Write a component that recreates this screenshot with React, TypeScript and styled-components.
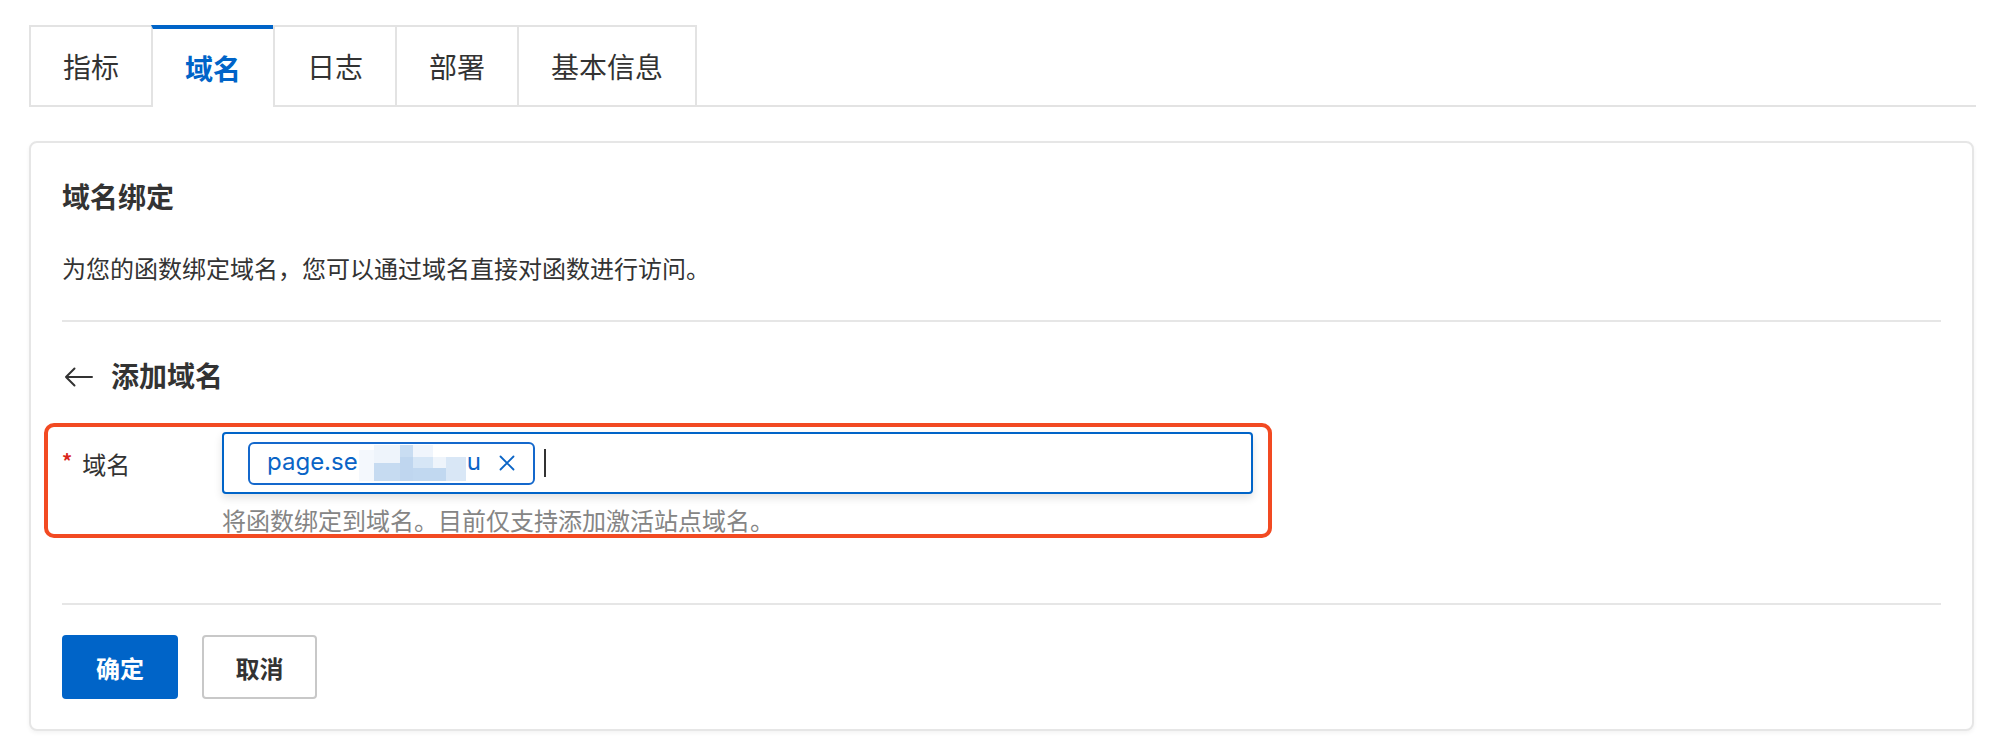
import React from "react";
import styled, { createGlobalStyle } from "styled-components";

const GlobalStyle = createGlobalStyle`
  html, body {
    margin: 0;
    padding: 0;
    background: #ffffff;
  }
  body {
    font-family: "Inter", "Noto Sans CJK SC", sans-serif;
    color: #333333;
  }
`;

const Page = styled.div`
  padding: 25px 18px 20px 29px;
`;

const TabBar = styled.div`
  display: flex;
  height: 80px;
  border-bottom: 2px solid #e3e3e3;
`;

const Tab = styled.div<{ $active?: boolean }>`
  display: flex;
  align-items: center;
  justify-content: center;
  box-sizing: border-box;
  height: ${(p) => (p.$active ? "82px" : "80px")};
  margin-bottom: ${(p) => (p.$active ? "-2px" : "0")};
  padding: 0 32px;
  background: #ffffff;
  border-top: ${(p) => (p.$active ? "4px solid #0064c8" : "2px solid #e3e3e3")};
  border-left: 2px solid #e3e3e3;
  font-family: "Noto Sans CJK SC", sans-serif;
  font-size: 28px;
  line-height: 40px;
  font-weight: ${(p) => (p.$active ? 700 : 400)};
  color: ${(p) => (p.$active ? "#0064c8" : "#333333")};

  &:last-child {
    border-right: 2px solid #e3e3e3;
  }
`;

const Card = styled.div`
  margin: 34px 2px 0 0;
  padding: 33px 31px 30px;
  border: 2px solid #e6e6e6;
  border-radius: 8px;
  background: #ffffff;
  box-shadow: 0 2px 4px rgba(0, 0, 0, 0.05);
`;

const Title = styled.div`
  font-family: "Noto Sans CJK SC", sans-serif;
  font-size: 28px;
  line-height: 40px;
  font-weight: 700;
  color: #333333;
`;

const Desc = styled.div`
  margin-top: 34px;
  font-family: "Noto Sans CJK SC", sans-serif;
  font-size: 24px;
  line-height: 36px;
  color: #333333;
`;

const Divider = styled.div<{ $top: number }>`
  margin-top: ${(p) => p.$top}px;
  height: 2px;
  background: #e6e6e6;
`;

const SubHeader = styled.div`
  display: flex;
  align-items: center;
  gap: 18px;
  margin-top: 33px;
  font-family: "Noto Sans CJK SC", sans-serif;
  font-size: 28px;
  line-height: 40px;
  font-weight: 700;
  color: #333333;

  svg {
    margin-top: 4px;
    margin-left: 2px;
  }
`;

const FormItem = styled.div`
  position: relative;
  margin-top: 37px;
  display: grid;
  grid-template-columns: 160px 1031px;
  row-gap: 10px;
`;

const Highlight = styled.div`
  position: absolute;
  left: -18px;
  top: -9px;
  width: 1228px;
  height: 115px;
  box-sizing: border-box;
  border: 4px solid #f24a22;
  border-radius: 10px;
  pointer-events: none;
`;

const Label = styled.div`
  display: flex;
  align-items: center;
  height: 62px;
  font-family: "Noto Sans CJK SC", sans-serif;
  font-size: 24px;
  color: #333333;
`;

const Required = styled.span`
  margin-right: 10px;
  margin-top: -6px;
  font-size: 20px;
  font-weight: 700;
  color: #d9261c;
`;

const TagInput = styled.div`
  display: flex;
  align-items: center;
  box-sizing: border-box;
  height: 62px;
  padding: 0 24px;
  border: 2px solid #0064c8;
  border-radius: 4px;
  background: #ffffff;
  box-shadow: 0 4px 8px rgba(0, 0, 0, 0.12);
`;

const Tag = styled.div`
  display: flex;
  align-items: center;
  box-sizing: border-box;
  height: 43px;
  padding: 0 18px 0 17px;
  border: 2px solid #1468cc;
  border-radius: 6px;
  font-family: "Inter", sans-serif;
  font-size: 24px;
  color: #0a64c6;
`;

const TagText = styled.span`
  line-height: 30px;
  margin-top: -2px;
`;

const Mosaic = styled.svg`
  display: block;
  margin: 0 1px 0 1px;
`;

const TagClose = styled.svg`
  display: block;
  margin-left: 18px;
`;

const Caret = styled.span`
  display: block;
  width: 2px;
  height: 28px;
  margin-left: 9px;
  background: #333333;
`;

const Help = styled.div`
  grid-column: 2;
  font-family: "Noto Sans CJK SC", sans-serif;
  font-size: 24px;
  line-height: 32px;
  color: #858585;
`;

const Actions = styled.div`
  display: flex;
  gap: 24px;
  margin-top: 30px;
`;

const Button = styled.button<{ $primary?: boolean }>`
  box-sizing: border-box;
  width: ${(p) => (p.$primary ? "116px" : "115px")};
  height: 64px;
  padding: 0;
  border-radius: 4px;
  border: ${(p) => (p.$primary ? "none" : "2px solid #c8c8c8")};
  background: ${(p) => (p.$primary ? "#0064c8" : "#ffffff")};
  color: ${(p) => (p.$primary ? "#ffffff" : "#333333")};
  font-family: "Noto Sans CJK SC", sans-serif;
  font-size: 24px;
  font-weight: 700;
  cursor: pointer;
`;

const tabs = ["指标", "域名", "日志", "部署", "基本信息"];

const mosaic: [number, number, number, number, string][] = [
  [0, 5, 15, 31, "#f4f8fd"],
  [15, 0, 26, 18, "#eef4fb"],
  [15, 18, 26, 18, "#c6dbf1"],
  [41, 0, 13, 12, "#c9ddf2"],
  [41, 12, 13, 24, "#bfd6ef"],
  [54, 0, 20, 12, "#f0f5fc"],
  [54, 12, 20, 11, "#d6e6f6"],
  [54, 23, 33, 13, "#c1d8f0"],
  [74, 12, 13, 11, "#eef4fb"],
  [87, 12, 20, 24, "#d9e7f6"],
];

export default function App() {
  return (
    <Page>
      <GlobalStyle />
      <TabBar>
        {tabs.map((t) => (
          <Tab key={t} $active={t === "域名"}>
            {t}
          </Tab>
        ))}
      </TabBar>

      <Card>
        <Title>域名绑定</Title>
        <Desc>为您的函数绑定域名，您可以通过域名直接对函数进行访问。</Desc>
        <Divider $top={34} />

        <SubHeader>
          <svg width="29" height="20" viewBox="0 0 29 20" fill="none">
            <path
              d="M28 10H2M10.5 1.5L2 10l8.5 8.5"
              stroke="#333"
              strokeWidth="2"
              strokeLinecap="round"
              strokeLinejoin="round"
            />
          </svg>
          添加域名
        </SubHeader>

        <FormItem>
          <Highlight />
          <Label>
            <Required>*</Required>
            域名
          </Label>
          <TagInput>
            <Tag>
              <TagText>page.se</TagText>
              <Mosaic width="107" height="36" viewBox="0 0 107 36">
                {mosaic.map(([x, y, w, h, c], i) => (
                  <rect key={i} x={x} y={y} width={w} height={h} fill={c} />
                ))}
              </Mosaic>
              <TagText>u</TagText>
              <TagClose width="16" height="16" viewBox="0 0 16 16">
                <path
                  d="M1.5 1.5l13 13M14.5 1.5l-13 13"
                  stroke="#0a64c6"
                  strokeWidth="1.8"
                  strokeLinecap="round"
                />
              </TagClose>
            </Tag>
            <Caret />
          </TagInput>
          <Help>将函数绑定到域名。目前仅支持添加激活站点域名。</Help>
        </FormItem>

        <Divider $top={67} />

        <Actions>
          <Button $primary>确定</Button>
          <Button>取消</Button>
        </Actions>
      </Card>
    </Page>
  );
}
